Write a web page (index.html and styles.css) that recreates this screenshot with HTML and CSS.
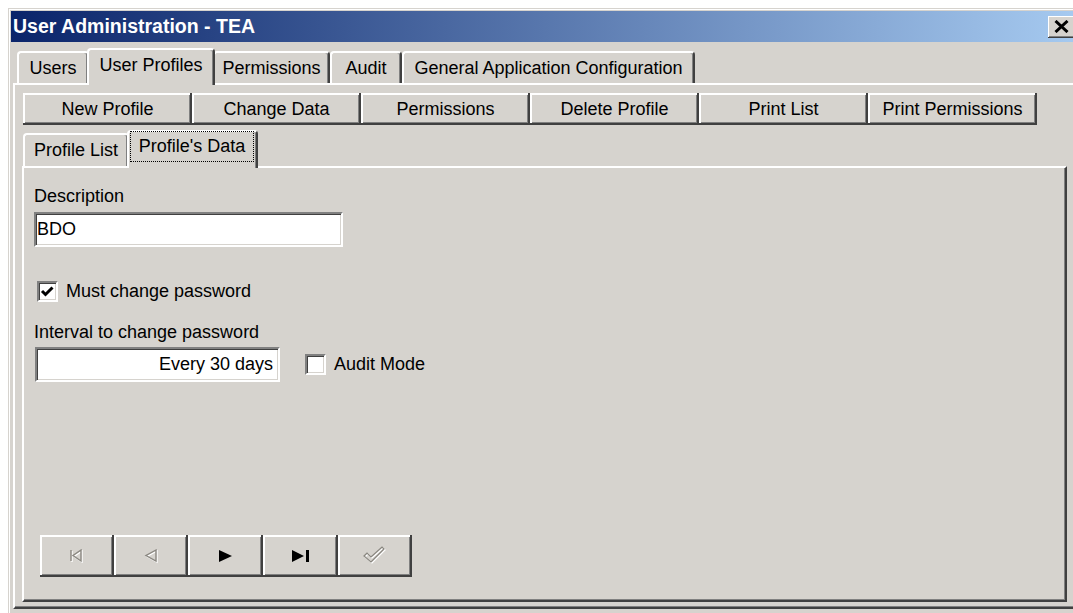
FILE: index.html
```html
<!DOCTYPE html>
<html lang="en">
<head>
<meta charset="utf-8">
<title>User Administration - TEA</title>
<link rel="stylesheet" href="styles.css">
</head>
<body>
<div class="window">
  <div class="titlebar">
    <span class="title">User Administration - TEA</span>
    <button class="close-btn" aria-label="Close">
      <svg width="15" height="13" viewBox="0 0 15 13"><path d="M1.5 1 L13.5 12 M13.5 1 L1.5 12" stroke="#000" stroke-width="3" fill="none"/></svg>
    </button>
  </div>

  <div class="tabs main-tabs">
    <div class="tab tab-users">Users</div>
    <div class="tab active tab-profiles">User Profiles</div>
    <div class="tab tab-perms">Permissions</div>
    <div class="tab tab-audit">Audit</div>
    <div class="tab tab-general">General Application Configuration</div>
  </div>

  <div class="panel outer-panel">
    <div class="toolbar">
      <button class="btn">New Profile</button>
      <button class="btn">Change Data</button>
      <button class="btn">Permissions</button>
      <button class="btn">Delete Profile</button>
      <button class="btn">Print List</button>
      <button class="btn">Print Permissions</button>
    </div>

    <div class="tabs sub-tabs">
      <div class="tab tab-list">Profile List</div>
      <div class="tab active tab-data"><span class="focus">Profile's Data</span></div>
    </div>

    <div class="panel inner-panel">
      <div class="form">
        <div class="field-label">Description</div>
        <div class="textbox desc">BDO</div>

        <label class="check-row must-change">
          <span class="checkbox">
            <svg width="17" height="17" viewBox="0 0 17 17"><path d="M3 8 L6.5 11.5 L13.5 4.5" stroke="#000" stroke-width="3" fill="none"/></svg>
          </span>
          <span>Must change password</span>
        </label>

        <div class="field-label interval-label">Interval to change password</div>
        <div class="interval-row">
          <div class="textbox interval">Every 30 days</div>
          <label class="check-row audit">
            <span class="checkbox"></span>
            <span>Audit Mode</span>
          </label>
        </div>
      </div>

      <div class="navbar">
        <button class="nav-btn w74" disabled aria-label="First">
          <svg width="16" height="14" viewBox="0 0 16 14">
            <g transform="translate(1 1)" stroke="#fff" stroke-width="1.4" fill="none"><path d="M2 1 V12"/><path d="M12 1 L4 6.5 L12 12 Z"/></g>
            <g stroke="#8a8780" stroke-width="1.4" fill="none"><path d="M2 1 V12"/><path d="M12 1 L4 6.5 L12 12 Z"/></g>
          </svg>
        </button>
        <button class="nav-btn w74" disabled aria-label="Previous">
          <svg width="16" height="15" viewBox="0 0 16 15">
            <path transform="translate(1 1)" d="M13 1 L3 6.5 L13 12 Z" stroke="#fff" stroke-width="1.4" fill="none"/>
            <path d="M13 1 L3 6.5 L13 12 Z" stroke="#8a8780" stroke-width="1.4" fill="none"/>
          </svg>
        </button>
        <button class="nav-btn w75" aria-label="Next">
          <svg width="14" height="12" viewBox="0 0 14 12"><path d="M0 0 L13 6 L0 12 Z" fill="#000"/></svg>
        </button>
        <button class="nav-btn w75" aria-label="Last">
          <svg width="18" height="12" viewBox="0 0 18 12"><path d="M0 0 L12 6 L0 12 Z" fill="#000"/><rect x="14" y="0" width="3" height="12" fill="#000"/></svg>
        </button>
        <button class="nav-btn w74" disabled aria-label="Post">
          <svg width="24" height="20" viewBox="0 0 24 20">
            <path transform="translate(1 1)" d="M1 10 L4 7 L8 11 L19 1 L21 3 L8 16 Z" stroke="#fff" stroke-width="1.2" fill="none"/>
            <path d="M1 10 L4 7 L8 11 L19 1 L21 3 L8 16 Z" stroke="#8a8780" stroke-width="1.2" fill="none"/>
          </svg>
        </button>
      </div>
    </div>
  </div>
</div>
</body>
</html>
```

FILE: styles.css
```css
* {
  box-sizing: border-box;
}

html,
body {
  margin: 0;
  padding: 0;
}

body {
  width: 1073px;
  height: 613px;
  overflow: hidden;
  background: #ffffff;
  font-family: "Liberation Sans", Arial, sans-serif;
  font-size: 18px;
  line-height: 21px;
  color: #000;
}

button {
  font: inherit;
  color: inherit;
  margin: 0;
  padding: 0;
  border: 0;
}

/* ---------- window frame ---------- */
.window {
  margin: 8px 0 0 8px;
  width: 1073px;
  height: 620px;
  padding: 3px;
  background: #d6d3ce;
  box-shadow: inset 1px 1px #d6d3ce, inset 2px 2px #ffffff;
}

.titlebar {
  height: 31px;
  display: flex;
  align-items: center;
  padding: 0 3px 0 2px;
  background: linear-gradient(to right, #0a246a 0%, #a6caf0 100%);
  color: #fff;
}

.title {
  font-weight: bold;
  font-size: 19.5px;
  letter-spacing: 0;
}

.close-btn {
  margin-left: auto;
  width: 27px;
  height: 22px;
  background: #d6d3ce;
  display: flex;
  align-items: center;
  justify-content: center;
  box-shadow: inset -1px -1px #404040, inset 1px 1px #ffffff, inset -2px -2px #808080;
}

/* ---------- tabs ---------- */
.tabs {
  display: flex;
  align-items: flex-end;
  height: 41px;
}

.main-tabs {
  margin-left: 2px;
  padding-left: 4px;
}

.sub-tabs {
  margin-left: 1px;
}

.tab {
  height: 32px;
  border: 2px solid;
  border-color: #ffffff #404040 transparent #ffffff;
  border-bottom: 0;
  border-radius: 4px 4px 0 0;
  background: #d6d3ce;
  box-shadow: inset -1px 0 #808080;
  display: flex;
  align-items: center;
  justify-content: center;
  white-space: nowrap;
}

.tab.active {
  position: relative;
  z-index: 1;
  height: 37px;
  margin: 0 -2px -2px;
  padding-bottom: 4px;
}

.tab-users { width: 72px; }
.tab-profiles { width: 128px; }
.tab-perms { width: 117px; }
.tab-audit { width: 72px; }
.tab-general { width: 293px; }

.sub-tabs .tab { height: 33px; }
.tab-list { width: 106px; }

.sub-tabs .tab.active.tab-data {
  width: 131px;
  height: 38px;
  padding: 0 2px 6px 1px;
  align-items: stretch;
}

.focus {
  flex: 1;
  margin-top: -1px;
  display: flex;
  align-items: center;
  justify-content: center;
  border: 1px dotted #000;
}

/* ---------- panels ---------- */
.panel {
  border: 2px solid;
  border-color: #ffffff #404040 #404040 #ffffff;
  box-shadow: inset -1px -1px #808080;
  background: #d6d3ce;
}

.outer-panel {
  margin-left: 2px;
  width: 1063px;
  height: 526px;
  padding: 8px 7px 5px 7px;
  display: flex;
  flex-direction: column;
}

.inner-panel {
  flex: 1;
  display: flex;
  flex-direction: column;
}

/* ---------- raised buttons ---------- */
.toolbar {
  display: flex;
  height: 32px;
  margin-left: 1px;
}

.btn,
.nav-btn {
  background: #d6d3ce;
  box-shadow: inset -2px -2px #404040, inset 2px 2px #ffffff, inset -3px -3px #808080;
  display: flex;
  align-items: center;
  justify-content: center;
  white-space: nowrap;
}

.btn {
  width: 169px;
  height: 32px;
}

/* ---------- form ---------- */
.form {
  padding: 18px 0 0 10px;
  display: flex;
  flex-direction: column;
  align-items: flex-start;
}

.textbox {
  height: 35px;
  background: #fff;
  border: 2px solid;
  border-color: #808080 #ffffff #ffffff #808080;
  box-shadow: inset 1px 1px #404040, inset -1px -1px #d6d3ce;
  display: flex;
  align-items: center;
  white-space: nowrap;
}

.textbox.desc {
  width: 309px;
  margin-top: 5px;
  padding-left: 1px;
}

.check-row {
  display: flex;
  align-items: center;
  height: 21px;
}

.must-change {
  margin-top: 34px;
  margin-left: 3px;
}

.checkbox {
  width: 21px;
  height: 21px;
  margin-right: 8px;
  background: #fff;
  border: 2px solid;
  border-color: #808080 #ffffff #ffffff #808080;
  box-shadow: inset 1px 1px #404040, inset -1px -1px #d6d3ce;
  display: flex;
  align-items: center;
  justify-content: center;
}

.interval-label {
  margin-top: 20px;
}

.interval-row {
  display: flex;
  align-items: center;
  margin-top: 4px;
}

.textbox.interval {
  width: 245px;
  margin-left: 1px;
  justify-content: flex-end;
  padding-right: 5px;
}

.audit {
  margin-left: 25px;
}

/* ---------- record navigator ---------- */
.navbar {
  display: flex;
  margin: auto 0 23px 16px;
}

.nav-btn {
  height: 42px;
}

.w74 { width: 74px; }
.w75 { width: 75px; }
```
